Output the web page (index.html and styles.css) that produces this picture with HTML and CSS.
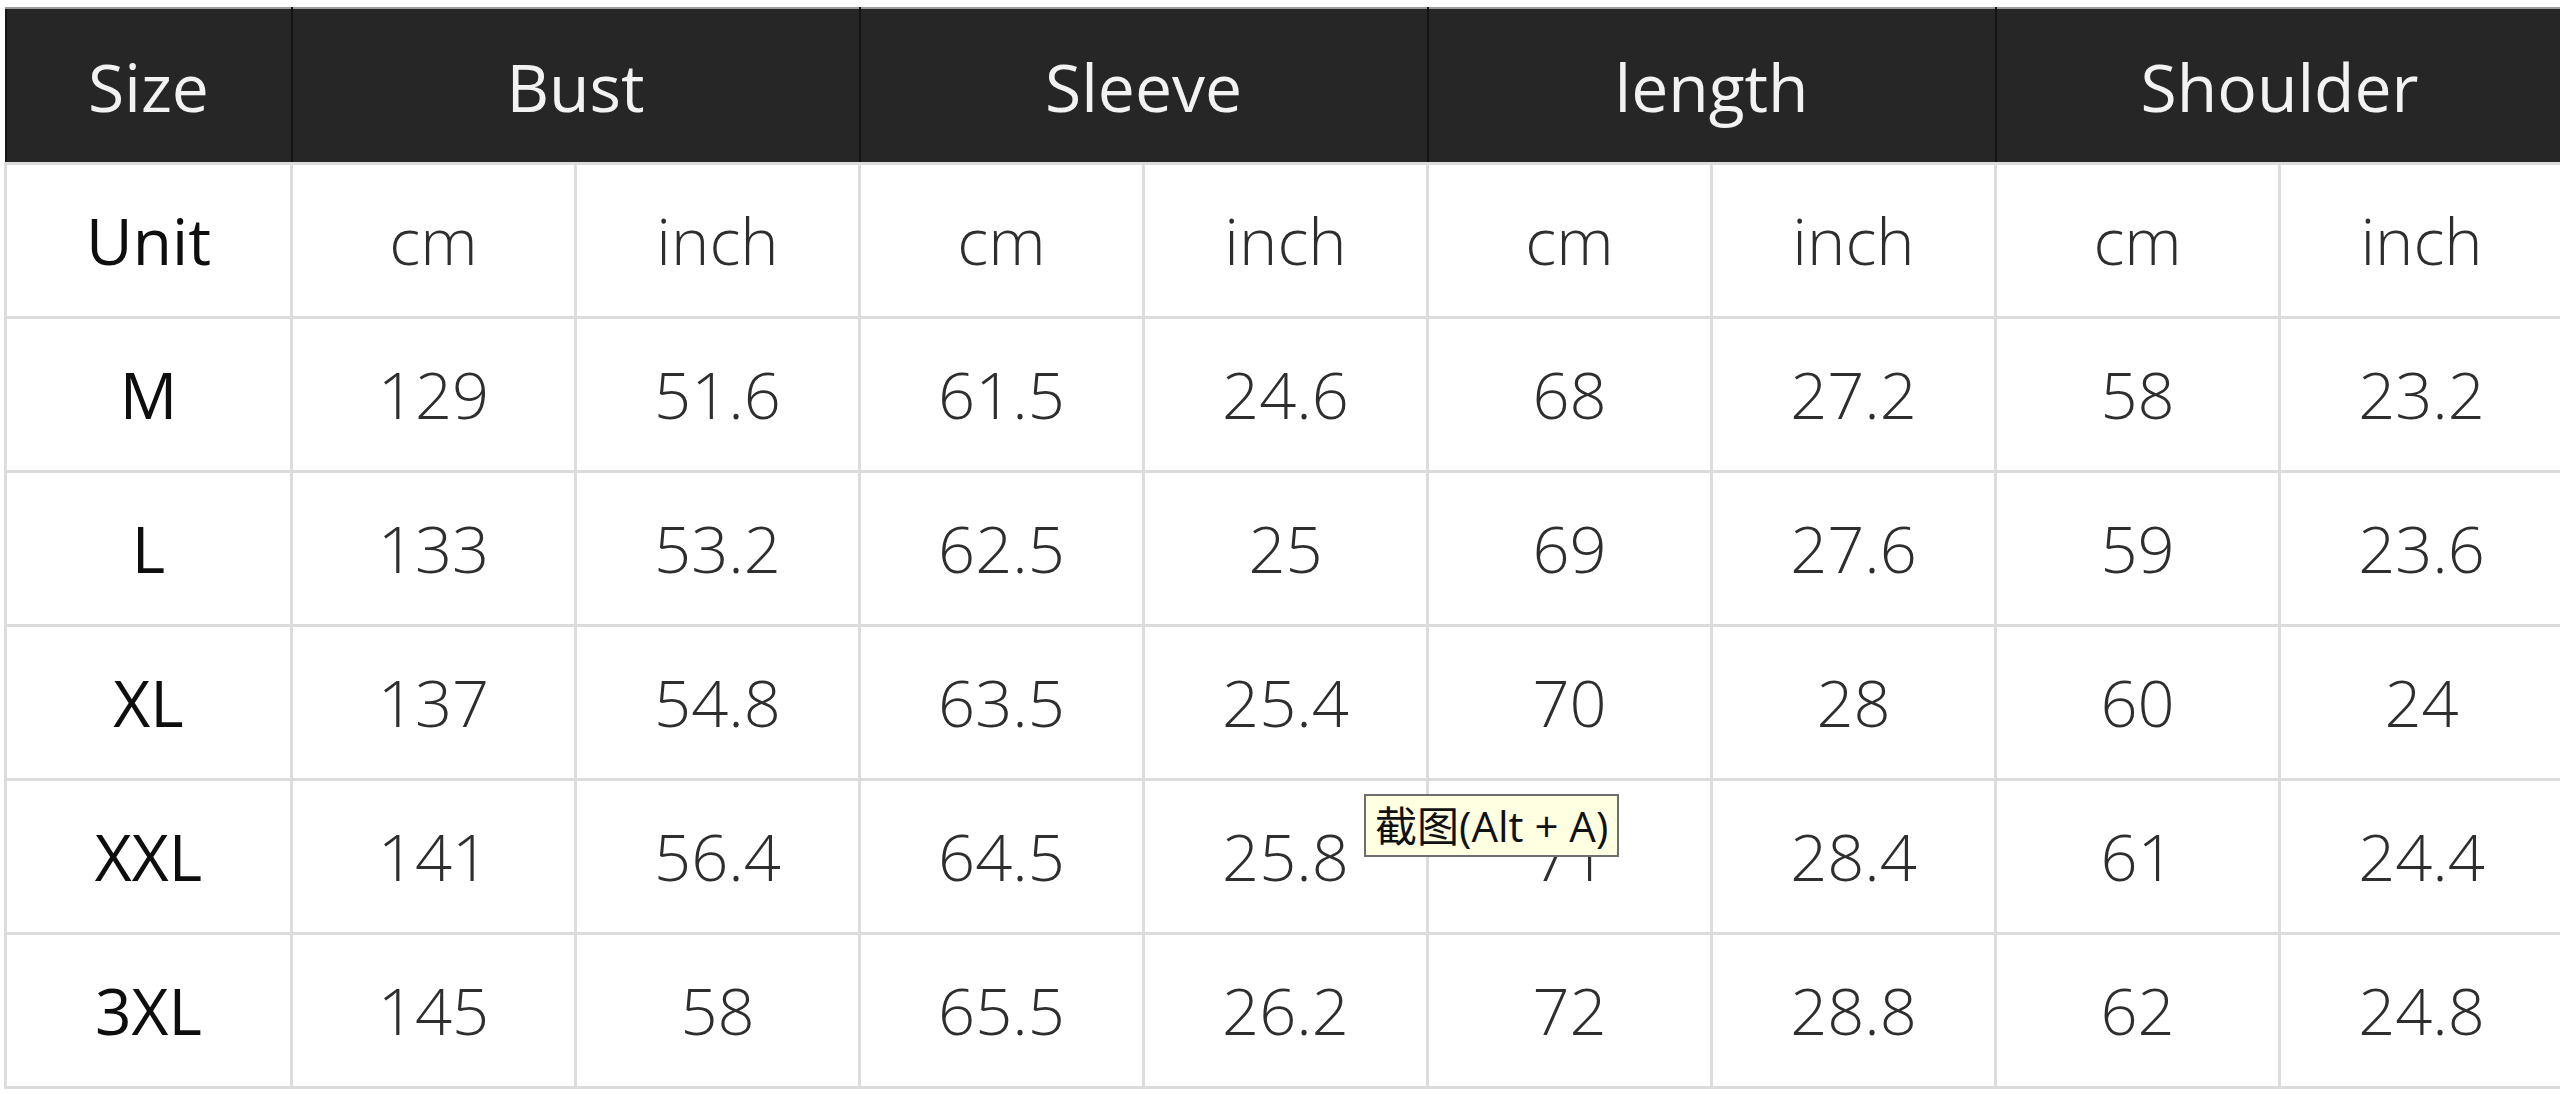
FILE: index.html
```html
<!DOCTYPE html>
<html lang="en">
<head>
<meta charset="utf-8">
<title>Size chart</title>
<link rel="stylesheet" href="styles.css">
</head>
<body>
<div class="wrap">
  <table class="chart">
    <colgroup>
      <col class="c-first">
      <col class="c"><col class="c"><col class="c"><col class="c">
      <col class="c"><col class="c"><col class="c"><col class="c">
    </colgroup>
    <thead>
      <tr>
        <th>Size</th>
        <th colspan="2">Bust</th>
        <th colspan="2">Sleeve</th>
        <th colspan="2">length</th>
        <th colspan="2">Shoulder</th>
      </tr>
    </thead>
    <tbody>
      <tr><td class="lbl">Unit</td><td>cm</td><td>inch</td><td>cm</td><td>inch</td><td>cm</td><td>inch</td><td>cm</td><td>inch</td></tr>
      <tr><td class="lbl">M</td><td>129</td><td>51.6</td><td>61.5</td><td>24.6</td><td>68</td><td>27.2</td><td>58</td><td>23.2</td></tr>
      <tr><td class="lbl">L</td><td>133</td><td>53.2</td><td>62.5</td><td>25</td><td>69</td><td>27.6</td><td>59</td><td>23.6</td></tr>
      <tr><td class="lbl">XL</td><td>137</td><td>54.8</td><td>63.5</td><td>25.4</td><td>70</td><td>28</td><td>60</td><td>24</td></tr>
      <tr><td class="lbl">XXL</td><td>141</td><td>56.4</td><td>64.5</td><td>25.8</td><td>71</td><td>28.4</td><td>61</td><td>24.4</td></tr>
      <tr><td class="lbl">3XL</td><td>145</td><td>58</td><td>65.5</td><td>26.2</td><td>72</td><td>28.8</td><td>62</td><td>24.8</td></tr>
    </tbody>
  </table>
  <div class="tooltip">截图(Alt + A)</div>
</div>
</body>
</html>
```
FILE: styles.css
```css
html, body {
  margin: 0;
  padding: 0;
  background: #ffffff;
  overflow: hidden;
}

.wrap {
  position: relative;
  padding: 7px 0 0 4px;
  width: 2600px;
}

.chart {
  border-collapse: collapse;
  table-layout: fixed;
  width: 2558px;
  font-family: "Open Sans", "Noto Sans", sans-serif;
}

.c-first { width: 286px; }
.c { width: 284px; }

.chart th,
.chart td {
  padding: 0;
  text-align: center;
  vertical-align: middle;
  line-height: 1;
}

.chart thead th {
  height: 153px;
  background: #262626;
  color: #f2f2f2;
  font-size: 66px;
  font-weight: 400;
  border: 2px solid #141414;
  border-top: 2px solid #9a9a9a;
  border-bottom: 2px solid #8a8a8a;
}

.chart td {
  height: 151px;
  border: 3px solid #dcdcdc;
  font-size: 65px;
  font-weight: 350;
  color: #2e2e2e;
}

.chart td.lbl {
  color: #0e0e0e;
  font-weight: 500;
  font-size: 64px;
}

.tooltip {
  position: absolute;
  left: 1364px;
  top: 794px;
  height: 59px;
  padding: 0 9px;
  box-sizing: content-box;
  display: flex;
  align-items: center;
  background: #ffffe1;
  border: 2px solid #6e6e6e;
  color: #111111;
  font-family: "Open Sans", "Noto Sans CJK SC", sans-serif;
  font-size: 42px;
  line-height: 1;
  white-space: nowrap;
}
```
